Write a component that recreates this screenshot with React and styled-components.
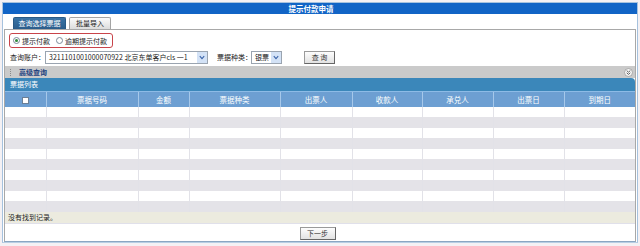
import styled, { createGlobalStyle } from "styled-components";

const GlobalStyle = createGlobalStyle`
  html, body {
    margin: 0;
    padding: 0;
    background: #f4f1f4;
    font-family: "Noto Sans CJK SC", "Liberation Sans", sans-serif;
    font-size: 7px;
    color: #222;
  }
`;

const Frame = styled.div`
  width: 634px;
  margin: 2px 0 0 2px;
  border: 1px solid #a6c2de;
  border-bottom-color: #b8cfe4;
  background: #fff;
`;

const TitleBar = styled.div`
  height: 11px;
  line-height: 11px;
  background: #1164c6;
  color: #fff;
  font-weight: bold;
  font-size: 7.5px;
  text-align: center;
  padding-right: 18px;
`;

const Tabs = styled.div`
  display: flex;
  gap: 3px;
  padding: 3px 0 0 10px;
`;

const Tab = styled.div`
  width: ${(p) => p.w}px;
  height: 12px;
  box-sizing: border-box;
  line-height: 11px;
  text-align: center;
  border-radius: 2px 2px 0 0;
  border: 1px solid ${(p) => (p.active ? "#295a86" : "#a4a4a4")};
  border-bottom: none;
  background: ${(p) =>
    p.active
      ? "linear-gradient(#3a74a6, #2b5d8b)"
      : "linear-gradient(#fbfbfb, #dcdcdc)"};
  color: ${(p) => (p.active ? "#fff" : "#222")};
`;

const Panel = styled.div`
  margin: 0 1px;
  border: 1px solid #a8a8a8;
  border-bottom-color: #8aa6c2;
  padding-top: 3px;
`;

const RadioBox = styled.div`
  display: inline-flex;
  align-items: center;
  gap: 6px;
  margin-left: 4px;
  height: 15px;
  width: 104px;
  box-sizing: border-box;
  padding-left: 3px;
  border: 1px solid #c8444a;
  border-radius: 3px;
`;

const RadioItem = styled.label`
  display: inline-flex;
  align-items: center;
  gap: 2px;
`;

const RadioDot = styled.span`
  width: 7px;
  height: 7px;
  box-sizing: border-box;
  border-radius: 50%;
  border: 1px solid #7a8a9a;
  background: #fff;
  display: inline-flex;
  align-items: center;
  justify-content: center;
  &::after {
    content: "";
    width: 3px;
    height: 3px;
    border-radius: 50%;
    background: ${(p) => (p.checked ? "#2f8a3a" : "transparent")};
  }
`;

const QueryRow = styled.div`
  display: flex;
  align-items: center;
  height: 14px;
  margin-top: 2px;
  padding-left: 5px;
`;

const Label = styled.span`
  width: ${(p) => p.w}px;
  margin-left: ${(p) => p.ml || 0}px;
  white-space: nowrap;
`;

const Select = styled.div`
  width: ${(p) => p.w}px;
  height: 13px;
  box-sizing: border-box;
  border: 1px solid #9aa4b0;
  background: #fff;
  display: flex;
  align-items: center;
  justify-content: space-between;
  padding-left: 3px;
  white-space: nowrap;
  overflow: hidden;
`;

const Arrow = styled.span`
  width: 10px;
  height: 11px;
  background: #d3e2f6;
  display: flex;
  align-items: center;
  justify-content: center;
`;

const Button = styled.button`
  display: block;
  margin-left: ${(p) => p.ml || 0}px;
  width: ${(p) => p.w}px;
  height: 13px;
  padding: 0;
  font: inherit;
  color: #333;
  background: linear-gradient(#fdfdfd, #e2e2e2);
  border: 1px solid #9a9a9a;
  border-right-color: #666;
  border-bottom-color: #666;
`;

const AdvBar = styled.div`
  margin-top: 2px;
  height: 12px;
  background: #cacaca;
  display: flex;
  align-items: center;
  justify-content: space-between;
  padding: 0 2px 0 5px;
  color: #1d3f7e;
  font-weight: bold;
`;

const Grip = styled.span`
  width: 1px;
  height: 7px;
  border-left: 1px dotted #8a8a8a;
  margin-right: 7px;
`;

const AdvTitle = styled.div`
  display: flex;
  align-items: center;
`;

const ListBar = styled.div`
  height: 13px;
  line-height: 13px;
  background: #3b87ba;
  color: #fff;
  padding-left: 5px;
  border-top-right-radius: 4px;
`;

const Table = styled.table`
  width: 630px;
  table-layout: fixed;
  border-collapse: collapse;
`;

const Th = styled.th`
  height: 15px;
  box-sizing: border-box;
  padding: 0;
  font-weight: normal;
  font-size: 7.5px;
  color: #fff;
  background: #6d9fd2;
  border-top: 1px solid #8dbbe6;
  border-left: 1px solid #a6c8ea;
  &:first-child {
    border-left: none;
  }
`;

const Check = styled.span`
  display: inline-block;
  width: 7px;
  height: 7px;
  box-sizing: border-box;
  border: 1px solid #6a7f96;
  background: #fff;
  vertical-align: middle;
`;

const Row = styled.tr`
  background: ${(p) => (p.odd ? "#e4e3e8" : "#fff")};
`;

const Td = styled.td`
  height: ${(p) => p.h}px;
  box-sizing: border-box;
  padding: 0;
  border-left: 1px solid #e2e2e8;
  &:first-child {
    border-left: none;
  }
`;

const Empty = styled.div`
  height: 11px;
  line-height: 11px;
  background: #ecebdf;
  padding-left: 3px;
`;

const Footer = styled.div`
  height: 18px;
  display: flex;
  justify-content: center;
  align-items: flex-start;
  padding: 3px 5px 0 0;
  box-sizing: border-box;
  border-top: 1px solid #e0e0ea;
`;

const Note = styled.div`
  margin: 2px 0 0 20px;
  color: #444;
`;

const columns = [
  { title: "", w: 41 },
  { title: "票据号码", w: 92 },
  { title: "金额", w: 51 },
  { title: "票据种类", w: 91 },
  { title: "出票人", w: 72 },
  { title: "收款人", w: 70 },
  { title: "承兑人", w: 71 },
  { title: "出票日", w: 71 },
  { title: "到期日", w: 71 },
];

const Chevron = () => (
  <svg width="6" height="5" viewBox="0 0 6 5">
    <path d="M0.8 1.2 L3 3.6 L5.2 1.2" fill="none" stroke="#3a63a8" strokeWidth="1.1" />
  </svg>
);

const CollapseIcon = () => (
  <svg width="9" height="9" viewBox="0 0 9 9">
    <circle cx="4.5" cy="4.5" r="4" fill="#f4f4f4" stroke="#9a9a9a" strokeWidth="0.8" />
    <path d="M2.7 2.6 L4.5 4.2 L6.3 2.6 M2.7 4.8 L4.5 6.4 L6.3 4.8" fill="none" stroke="#555" strokeWidth="0.9" />
  </svg>
);

export default function App() {
  return (
    <>
      <GlobalStyle />
      <Frame>
        <TitleBar>提示付款申请</TitleBar>
        <Tabs>
          <Tab w={53} active>查询选择票据</Tab>
          <Tab w={42}>批量导入</Tab>
        </Tabs>
        <Panel>
          <RadioBox>
            <RadioItem>
              <RadioDot checked />
              提示付款
            </RadioItem>
            <RadioItem>
              <RadioDot />
              逾期提示付款
            </RadioItem>
          </RadioBox>
          <QueryRow>
            <Label w={35}>查询账户：</Label>
            <Select w={163}>
              <span>3211101001000070922 北京东单客户cls 一1</span>
              <Arrow>
                <Chevron />
              </Arrow>
            </Select>
            <Label w={34} ml={9}>票据种类：</Label>
            <Select w={31}>
              <span>银票</span>
              <Arrow>
                <Chevron />
              </Arrow>
            </Select>
            <Button w={31} ml={22}>查 询</Button>
          </QueryRow>
          <AdvBar>
            <AdvTitle>
              <Grip />
              高级查询
            </AdvTitle>
            <CollapseIcon />
          </AdvBar>
          <ListBar>票据列表</ListBar>
          <Table>
            <colgroup>
              {columns.map((c, i) => (
                <col key={i} style={{ width: c.w }} />
              ))}
            </colgroup>
            <thead>
              <tr>
                {columns.map((c, i) => (
                  <Th key={i}>{i === 0 ? <Check /> : c.title}</Th>
                ))}
              </tr>
            </thead>
            <tbody>
              {Array.from({ length: 10 }).map((_, r) => (
                <Row key={r} odd={r % 2 === 1}>
                  {columns.map((c, i) => (
                    <Td key={i} h={r % 2 === 0 ? 10 : 11} />
                  ))}
                </Row>
              ))}
            </tbody>
          </Table>
          <Empty>没有找到记录。</Empty>
          <Footer>
            <Button w={36}>下一步</Button>
          </Footer>
        </Panel>
      </Frame>
      <Note>操作说明：</Note>
    </>
  );
}
